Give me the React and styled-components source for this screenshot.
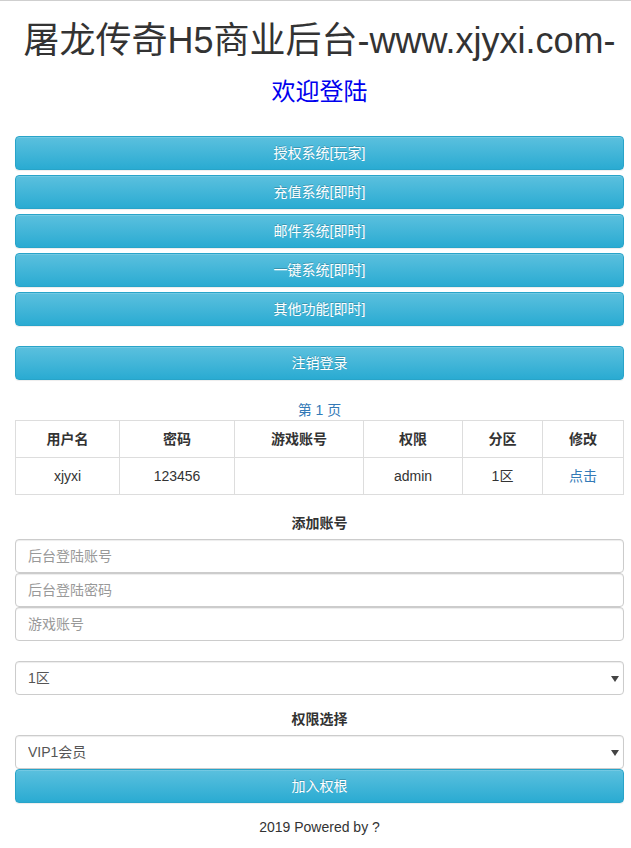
import React from 'react';
import styled, { createGlobalStyle } from 'styled-components';

const GlobalStyle = createGlobalStyle`
  html, body {
    margin: 0;
    padding: 0;
    background: #fff;
  }
  body {
    border-top: 1px solid #cfcfcf;
    font-family: "Liberation Sans", "Noto Sans CJK SC", Arial, sans-serif;
    font-size: 14px;
    line-height: 20px;
    color: #333;
  }
  * {
    box-sizing: border-box;
  }
`;

const Page = styled.div`
  padding: 0 7px 0 15px;
  display: flex;
  flex-direction: column;
`;

const Title = styled.h1`
  margin: 20px 0 0;
  font-size: 36px;
  line-height: 40px;
  font-weight: 400;
  text-align: center;
  color: #333;
  white-space: nowrap;
`;

const Welcome = styled.h2`
  margin: 17px 0 0;
  font-size: 24px;
  line-height: 28px;
  font-weight: 400;
  text-align: center;
  color: #0000ee;
`;

const ButtonGroup = styled.div`
  display: flex;
  flex-direction: column;
  gap: ${(p) => p.$gap || 0}px;
  margin-top: ${(p) => p.$top || 0}px;
`;

const InfoButton = styled.button`
  display: block;
  width: 100%;
  height: 34px;
  padding: 6px 12px;
  font-family: inherit;
  font-size: 14px;
  line-height: 20px;
  color: #fff;
  text-align: center;
  text-shadow: 0 -1px 0 rgba(0, 0, 0, 0.2);
  background: linear-gradient(to bottom, #5bc0de 0, #2aabd2 100%);
  border: 1px solid #28a4c9;
  border-radius: 4px;
  box-shadow: inset 0 1px 0 rgba(255, 255, 255, 0.15), 0 1px 1px rgba(0, 0, 0, 0.075);
  cursor: pointer;
`;

const PageLabel = styled.div`
  margin-top: 20px;
  text-align: center;
  color: #337ab7;
  line-height: 20px;
`;

const Table = styled.table`
  width: 100%;
  border-collapse: collapse;
  border: 1px solid #ddd;
  text-align: center;
`;

const Th = styled.th`
  padding: 8px;
  border: 1px solid #ddd;
  font-weight: 700;
  line-height: 20px;
  width: ${(p) => p.$w}px;
`;

const Td = styled.td`
  padding: 8px;
  border: 1px solid #ddd;
  line-height: 20px;
`;

const Link = styled.a`
  color: #337ab7;
  text-decoration: none;
`;

const SectionLabel = styled.div`
  margin-top: ${(p) => p.$top}px;
  margin-bottom: 6px;
  text-align: center;
  font-weight: 700;
  line-height: 20px;
`;

const Stack = styled.div`
  display: flex;
  flex-direction: column;
`;

const Input = styled.input`
  display: block;
  width: 100%;
  height: 34px;
  padding: 6px 12px;
  font-family: inherit;
  font-size: 14px;
  color: #555;
  background: #fff;
  border: 1px solid #ccc;
  border-radius: 4px;
  box-shadow: inset 0 1px 1px rgba(0, 0, 0, 0.075);
  outline: none;
  &::placeholder {
    color: #999;
  }
`;

const SelectWrap = styled.div`
  position: relative;
  margin-top: ${(p) => p.$top || 0}px;
  &::after {
    content: '';
    position: absolute;
    right: 5px;
    top: 15px;
    border-left: 4px solid transparent;
    border-right: 4px solid transparent;
    border-top: 6px solid #444;
    pointer-events: none;
  }
`;

const Select = styled.select`
  display: block;
  width: 100%;
  height: 34px;
  padding: 6px 12px;
  font-family: inherit;
  font-size: 14px;
  color: #555;
  background: #fff;
  border: 1px solid #ccc;
  border-radius: 4px;
  box-shadow: inset 0 1px 1px rgba(0, 0, 0, 0.075);
  appearance: none;
  -webkit-appearance: none;
  outline: none;
`;

const Footer = styled.footer`
  margin-top: 14px;
  padding-bottom: 10px;
  text-align: center;
  color: #333;
  line-height: 20px;
`;

const menu = ['授权系统[玩家]', '充值系统[即时]', '邮件系统[即时]', '一键系统[即时]', '其他功能[即时]'];

export default function App() {
  return (
    <>
      <GlobalStyle />
      <Page>
        <Title>屠龙传奇H5商业后台-www.xjyxi.com-</Title>
        <Welcome>欢迎登陆</Welcome>

        <ButtonGroup $gap={5} $top={30}>
          {menu.map((m) => (
            <InfoButton key={m}>{m}</InfoButton>
          ))}
        </ButtonGroup>

        <ButtonGroup $top={20}>
          <InfoButton>注销登录</InfoButton>
        </ButtonGroup>

        <PageLabel>第 1 页</PageLabel>
        <Table>
          <thead>
            <tr>
              <Th $w={104}>用户名</Th>
              <Th $w={115}>密码</Th>
              <Th $w={129}>游戏账号</Th>
              <Th $w={99}>权限</Th>
              <Th $w={80}>分区</Th>
              <Th>修改</Th>
            </tr>
          </thead>
          <tbody>
            <tr>
              <Td>xjyxi</Td>
              <Td>123456</Td>
              <Td></Td>
              <Td>admin</Td>
              <Td>1区</Td>
              <Td>
                <Link href="#">点击</Link>
              </Td>
            </tr>
          </tbody>
        </Table>

        <SectionLabel $top={18}>添加账号</SectionLabel>
        <Stack>
          <Input placeholder="后台登陆账号" />
          <Input placeholder="后台登陆密码" />
          <Input placeholder="游戏账号" />
        </Stack>

        <SelectWrap $top={20}>
          <Select defaultValue="1">
            <option value="1">1区</option>
          </Select>
        </SelectWrap>

        <SectionLabel $top={14}>权限选择</SectionLabel>
        <SelectWrap>
          <Select defaultValue="vip1">
            <option value="vip1">VIP1会员</option>
          </Select>
        </SelectWrap>
        <InfoButton>加入权根</InfoButton>

        <Footer>2019 Powered by ?</Footer>
      </Page>
    </>
  );
}
